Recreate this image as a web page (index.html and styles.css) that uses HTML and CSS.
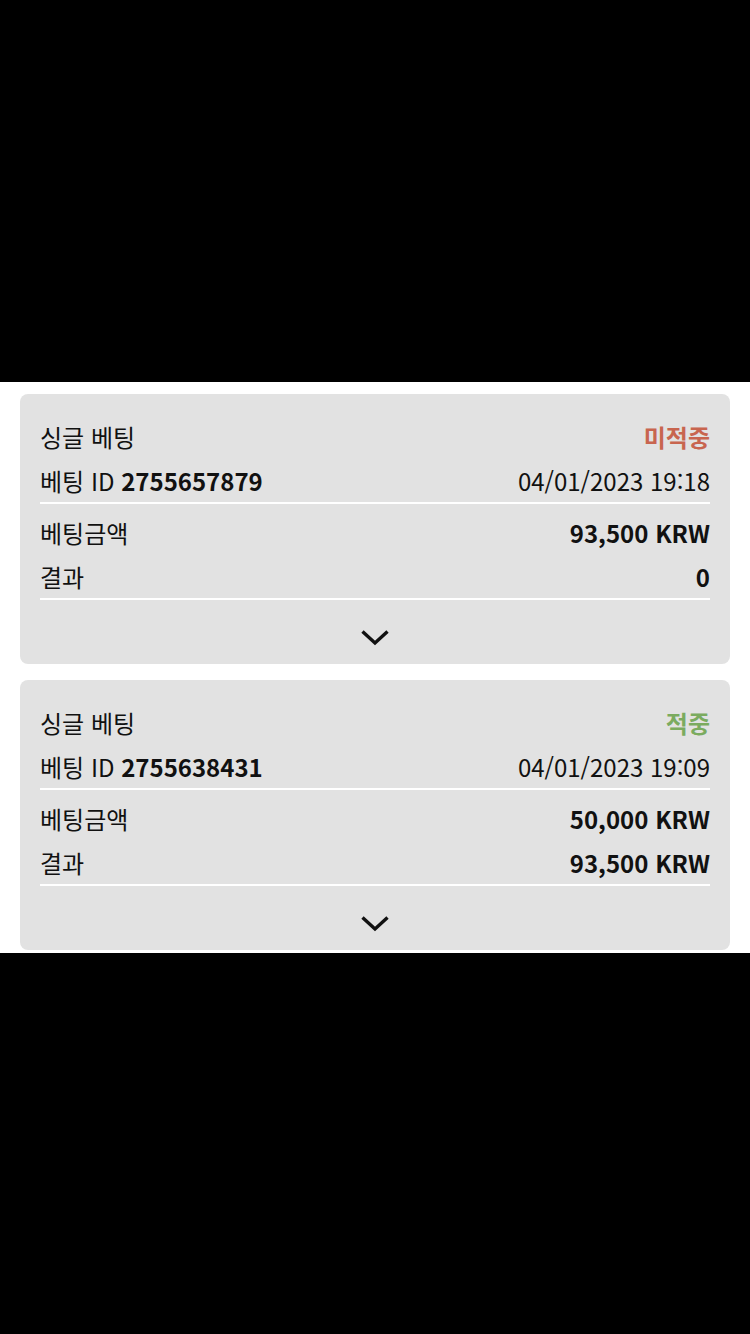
FILE: index.html
```html
<!DOCTYPE html>
<html lang="ko">
<head>
    <meta charset="UTF-8">
    <meta name="viewport" content="width=device-width, initial-scale=1.0">
    <title>베팅 내역</title>
    <link rel="stylesheet" href="styles.css">
</head>
<body>
    <div class="top-space"></div>
    <div class="list">
        <div class="card">
            <div class="row">
                <span>싱글 베팅</span>
                <span class="status lose">미적중</span>
            </div>
            <div class="row">
                <span>베팅 ID <b>2755657879</b></span>
                <span>04/01/2023 19:18</span>
            </div>
            <div class="divider"></div>
            <div class="row">
                <span>베팅금액</span>
                <b>93,500 KRW</b>
            </div>
            <div class="row">
                <span>결과</span>
                <b>0</b>
            </div>
            <div class="divider"></div>
            <div class="more">
                <svg width="28" height="18" viewBox="0 0 28 18"><path d="M1.5 2.5 L14 14 L26.5 2.5" fill="none" stroke="#111" stroke-width="3.4"/></svg>
            </div>
        </div>
        <div class="card">
            <div class="row">
                <span>싱글 베팅</span>
                <span class="status win">적중</span>
            </div>
            <div class="row">
                <span>베팅 ID <b>2755638431</b></span>
                <span>04/01/2023 19:09</span>
            </div>
            <div class="divider"></div>
            <div class="row">
                <span>베팅금액</span>
                <b>50,000 KRW</b>
            </div>
            <div class="row">
                <span>결과</span>
                <b>93,500 KRW</b>
            </div>
            <div class="divider"></div>
            <div class="more">
                <svg width="28" height="18" viewBox="0 0 28 18"><path d="M1.5 2.5 L14 14 L26.5 2.5" fill="none" stroke="#111" stroke-width="3.4"/></svg>
            </div>
        </div>
    </div>
</body>
</html>
```

FILE: styles.css
```css
body {
    margin: 0;
    background-color: #000;
    font-family: "Noto Sans CJK KR", "Noto Sans", sans-serif;
    color: #111;
}
.top-space {
    height: 382px;
}
.list {
    background-color: #fff;
    padding: 12px 20px 3px;
    display: flex;
    flex-direction: column;
    gap: 16px;
}
.card {
    background-color: #e2e2e2;
    border-radius: 8px;
    padding: 20px 20px 0;
}
.row {
    display: flex;
    justify-content: space-between;
    align-items: center;
    height: 44px;
    font-size: 24px;
}
.row b {
    font-weight: 700;
}
.divider {
    height: 2px;
    background-color: #fff;
    margin-bottom: 6px;
}
.status {
    font-weight: 700;
}
.lose {
    color: #c8654f;
}
.win {
    color: #7bab5f;
}
.more {
    display: flex;
    justify-content: center;
    padding: 29px 0 17px;
    margin-top: -6px;
}
```
